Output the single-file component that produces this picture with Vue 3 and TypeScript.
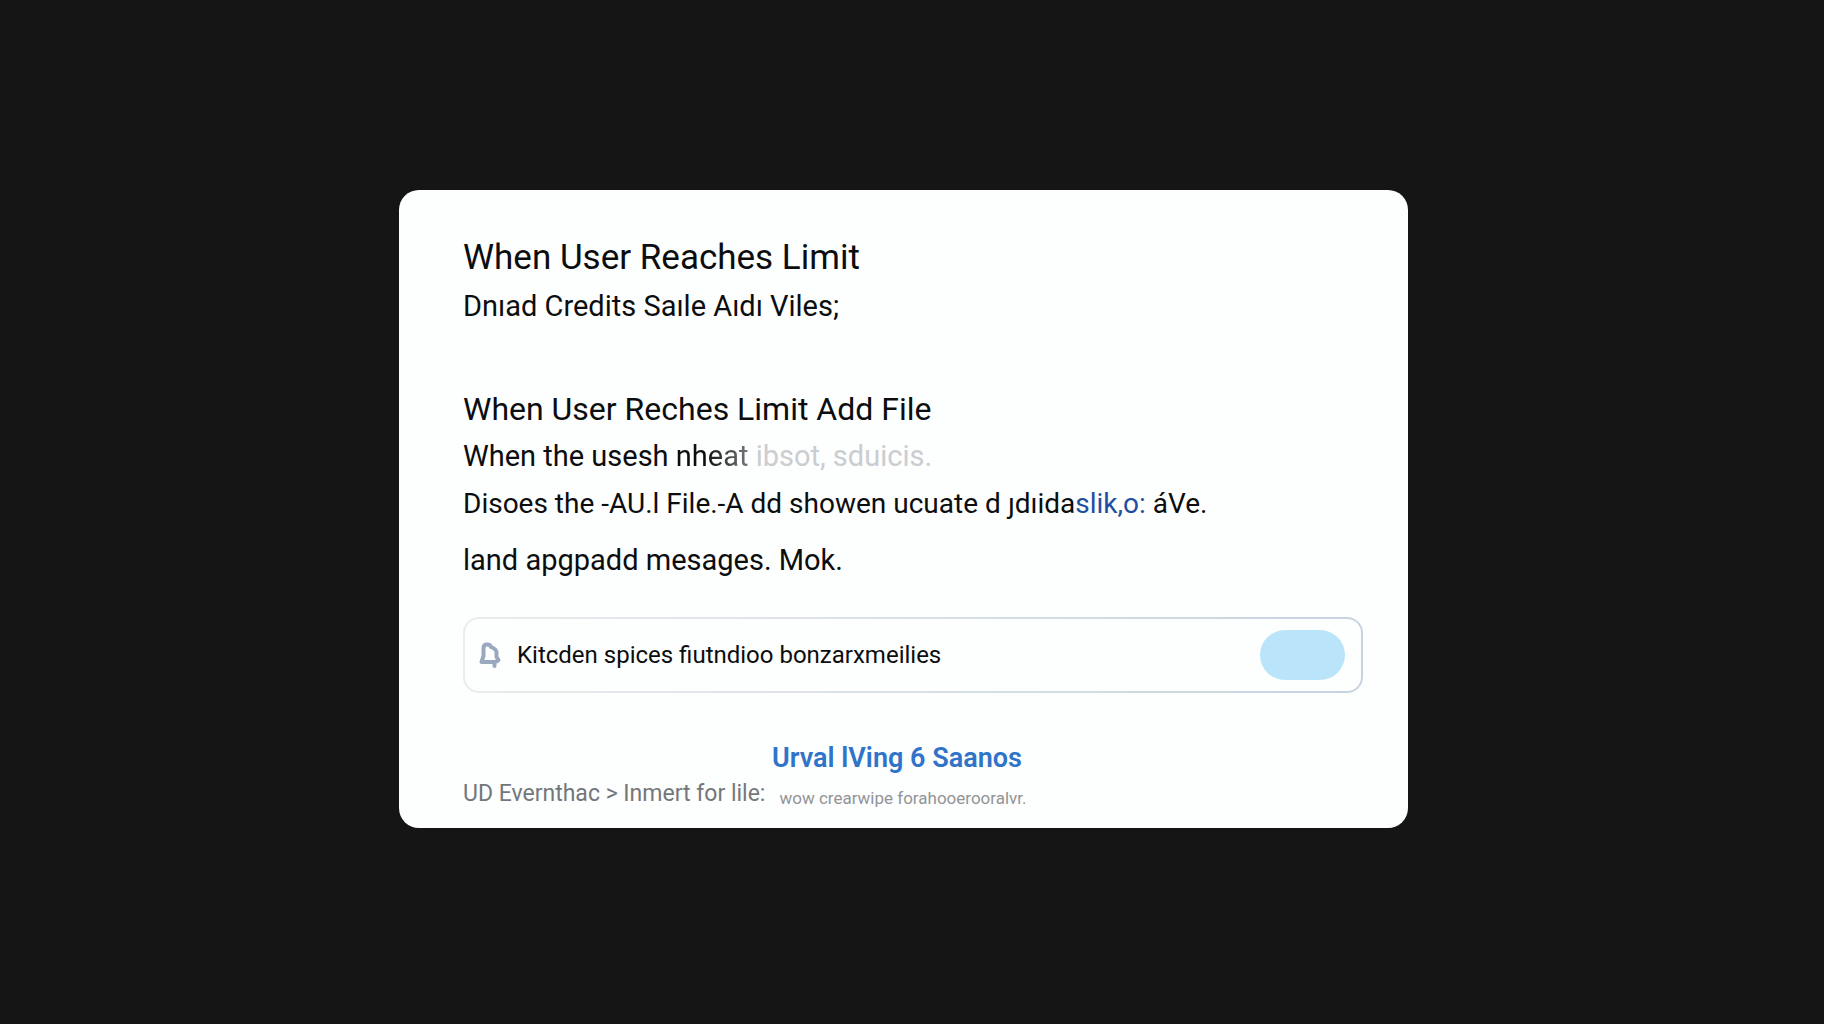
<script setup lang="ts">
import { ref } from 'vue'

const enabled = ref<boolean>(false)
</script>

<template>
  <main class="page">
    <section class="card">
      <header class="intro">
        <h1 class="title">When User Reaches Limit</h1>
        <p class="subtitle">Dnıad Credits Saıle Aıdı Viles;</p>
      </header>

      <div class="details">
        <h2 class="heading">When User Reches Limit Add File</h2>
        <p class="line">When the usesh <span class="fading">nheat</span> <span class="faded">ibsot, sduicis.</span></p>
        <p class="line long">Disoes the -AU.l File.-A dd showen ucuate d ȷdıida<a class="inline-link" href="#">slik,o:</a> áVe.</p>
        <p class="line last">land apgpadd mesages. Mok.</p>
      </div>

      <div class="option">
        <svg class="bell" viewBox="0 0 22 26" aria-hidden="true">
          <path d="M2.5 20 L4.500 14 V6 Q4.500 2.500 8 2.500 Q11.500 2.500 12 5 Q17 7 17.500 10 V15 L19.500 18 Q18 20 15.500 20 Z M15.500 20 V24" />
        </svg>
        <label class="option-label" for="option-toggle">Kitcden spices fiutndioo bonzarxmeilies</label>
        <input id="option-toggle" v-model="enabled" class="toggle" type="checkbox" />
      </div>

      <a class="action" href="#">Urval lVing 6 Saanos</a>

      <footer class="footer">
        <span class="event">UD Evernthac &gt; Inmert for lile:</span>
        <span class="note">wow crearwipe forahooerooralvr.</span>
      </footer>
    </section>
  </main>
</template>

<style>
body {
  margin: 0;
  background: #151515;
}
</style>

<style scoped>
.page {
  box-sizing: border-box;
  min-height: 100vh;
  display: flex;
  align-items: center;
  justify-content: center;
  padding: 24px 17px 30px 0;
  background: #151515;
  font-family: Roboto, "Liberation Sans", sans-serif;
  color: #0c0d0e;
}

.card {
  box-sizing: border-box;
  width: 56%;
  max-width: 1009px;
  padding: 44px 45px 18px 64px;
  display: flex;
  flex-direction: column;
  border-radius: 20px;
  background: #fdfefe;
}

.title,
.subtitle,
.heading,
.line {
  margin: 0;
  font-weight: 400;
}

.title {
  font-size: 35px;
  line-height: 48px;
}

.subtitle {
  font-size: 29px;
  line-height: 48px;
}

.details {
  margin-top: 56px;
}

.heading {
  font-size: 32px;
  line-height: 46px;
}

.line {
  font-size: 29px;
  line-height: 48px;
}

.long {
  font-size: 28px;
}

.last {
  margin-top: 8px;
}

.fading {
  background: linear-gradient(90deg, #0c0d0e 40%, #74777a);
  background-clip: text;
  color: transparent;
}

.faded {
  color: #cbcdd0;
}

.inline-link {
  color: #1d4fa3;
  text-decoration: none;
}

.option {
  box-sizing: border-box;
  min-height: 76px;
  margin-top: 33px;
  padding: 0 16px 0 14px;
  display: flex;
  align-items: center;
  border: 2px solid transparent;
  border-radius: 16px;
  background:
    linear-gradient(#fdfefe, #fdfefe) padding-box,
    linear-gradient(90deg, #e9ecee, #c8d3e0) border-box;
}

.bell {
  width: 22px;
  height: 26px;
  flex: none;
  fill: none;
  stroke: #9aa9c0;
  stroke-width: 4;
  stroke-linecap: round;
  stroke-linejoin: round;
}

.option-label {
  flex: 1;
  margin-left: 16px;
  font-size: 24px;
  line-height: 32px;
}

.toggle {
  appearance: none;
  width: 85px;
  height: 50px;
  margin: 0;
  border-radius: 25px;
  background: #b9e4f9;
  cursor: pointer;
}

.action {
  align-self: center;
  margin-top: 49px;
  margin-right: 32px;
  font-size: 27px;
  line-height: 32px;
  font-weight: 600;
  color: #2f74c8;
  text-decoration: none;
}

.footer {
  margin-top: 4px;
  display: flex;
  align-items: flex-end;
  gap: 14px;
}

.event {
  font-size: 23px;
  line-height: 32px;
  color: #74777a;
}

.note {
  font-size: 17px;
  line-height: 24px;
  color: #929496;
}
</style>
